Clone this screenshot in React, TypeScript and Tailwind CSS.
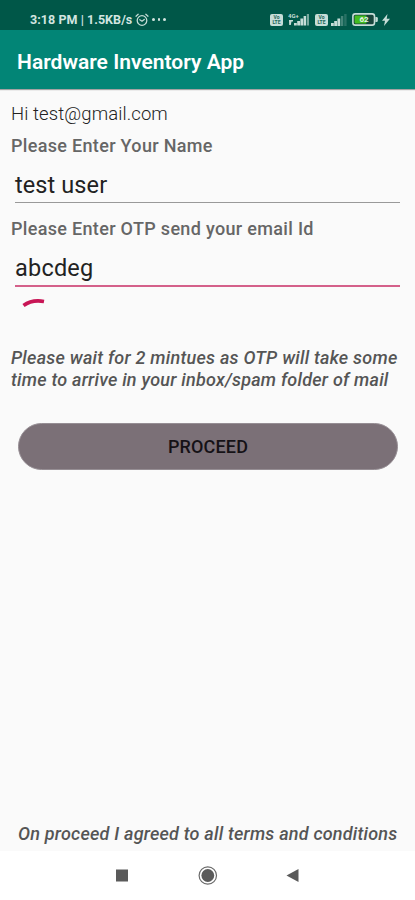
function AlarmIcon() {
  return (
    <svg width="14" height="14" viewBox="0 0 14 14" fill="none" stroke="#c3dbd5" strokeWidth="1.3" strokeLinecap="round">
      <circle cx="7" cy="7.5" r="4.8" />
      <path d="M1 3.2 3.2 1.3M13 3.2 10.8 1.3M4.8 6.8 7 8.3l2.3-1.8" />
    </svg>
  );
}

function VolteBadge() {
  return (
    <span className="flex h-3 w-[13px] flex-col items-center justify-center rounded-[2px] bg-[#c6ddd7] text-[5px] leading-[5px] font-bold text-[#1c6558]">
      <span>Vo</span>
      <span>LTE</span>
    </span>
  );
}

function SignalIcon() {
  return (
    <svg width="16" height="12" viewBox="0 0 16 12" fill="#c6ddd7">
      <rect x="0" y="9" width="2.8" height="3" />
      <rect x="3.2" y="7" width="2.8" height="5" />
      <rect x="6.4" y="4.5" width="2.8" height="7.5" />
      <rect x="9.9" y="2" width="2.4" height="10" opacity="0.35" />
      <rect x="13.2" y="0" width="2.4" height="12" opacity="0.2" />
    </svg>
  );
}

function MobileDataIcon() {
  return (
    <svg width="22" height="13" viewBox="0 0 22 13" fill="#c6ddd7">
      <text x="0" y="4.8" fontSize="6" fontWeight="700" fontFamily="Roboto, sans-serif">4G+</text>
      <path d="M1 7h4v1.5H3.5L2.8 12H1.2z" />
      <rect x="6" y="10" width="2.8" height="2.5" />
      <rect x="9.2" y="8" width="2.8" height="4.5" />
      <rect x="12.4" y="5.5" width="2.8" height="7" />
      <rect x="15.6" y="3" width="2.5" height="9.5" />
      <rect x="18.8" y="1" width="2.2" height="11.5" opacity="0.6" />
    </svg>
  );
}

function BatteryIcon() {
  return (
    <svg width="26" height="13" viewBox="0 0 26 13">
      <rect x="0.9" y="0.9" width="21.6" height="11.2" rx="2.4" fill="#18463c" stroke="#c6ddd7" strokeWidth="1.6" />
      <path d="M23.4 4h1.1q1.3 0 1.3 1.3v2.4q0 1.3-1.3 1.3h-1.1z" fill="#c6ddd7" />
      <rect x="2.6" y="2.6" width="12" height="7.8" rx="0.8" fill="#43bd21" />
      <text x="12" y="9.4" fontSize="8" fontWeight="700" textAnchor="middle" fill="#e7f5e8" fontFamily="Roboto, sans-serif">62</text>
    </svg>
  );
}

function StatusBar() {
  return (
    <div className="flex h-[30px] items-center bg-[#005748] pt-[9px] pl-[30px] text-[#d3e5e0]">
      <span className="w-[103px] text-[12.5px] leading-[14px] font-bold tracking-[0.05px] whitespace-nowrap">
        3:18 PM | 1.5KB/s
      </span>
      <span className="ml-[2px]">
        <AlarmIcon />
      </span>
      <span className="ml-[3px] flex gap-[3px]">
        <i className="size-[2.5px] rounded-full bg-current" />
        <i className="size-[2.5px] rounded-full bg-current" />
        <i className="size-[2.5px] rounded-full bg-current" />
      </span>
      <div className="ml-auto flex items-center pr-[25px]">
        <VolteBadge />
        <span className="ml-[5px]">
          <MobileDataIcon />
        </span>
        <span className="ml-[5px]">
          <VolteBadge />
        </span>
        <span className="ml-[3px]">
          <SignalIcon />
        </span>
        <span className="ml-[5px]">
          <BatteryIcon />
        </span>
        <svg className="ml-[4px]" width="8" height="12" viewBox="0 0 8 12" fill="#c6ddd7">
          <path d="M5.5 0 0 6.8h3L2 12l6-7.2H4.7z" />
        </svg>
      </div>
    </div>
  );
}

function NavBar() {
  return (
    <div className="h-[49px] bg-white">
      <svg width="415" height="49" viewBox="0 0 415 49" fill="#5a5a5a">
        <rect x="116" y="18.5" width="12" height="12" />
        <circle cx="207.8" cy="24.5" r="8.7" fill="none" stroke="#6a6a6a" strokeWidth="1.2" />
        <circle cx="207.8" cy="24.5" r="6.4" />
        <path d="M286.5 24.5 298.5 18v13z" />
      </svg>
    </div>
  );
}

export default function App() {
  return (
    <div className="flex h-[900px] w-[415px] flex-col overflow-hidden bg-[#fafafa] font-['Roboto',sans-serif]">
      <StatusBar />
      <header className="flex h-[59px] items-center bg-[#028576] pt-1 pl-[17px] shadow-[0_1px_1px_rgba(0,0,0,0.35)]">
        <h1 className="text-[21px] leading-6 font-semibold tracking-[0.02px] whitespace-nowrap text-white">
          Hardware Inventory App
        </h1>
      </header>

      <main className="flex flex-1 flex-col pl-[11px] whitespace-nowrap text-[#666]">
        <p className="mt-[13px] text-[18.5px] leading-6 font-light tracking-[0.1px] text-[#222]">Hi test@gmail.com</p>
        <label className="mt-[8px] text-[18px] leading-6 font-medium tracking-[0.32px]">Please Enter Your Name</label>
        <div className="mt-[10px] mr-[15px] ml-[4px] flex h-[35px] items-center border-b border-[#999] text-[23.5px] leading-7 tracking-[0.1px] text-[#222]">
          test user
        </div>
        <label className="mt-[14px] text-[18px] leading-6 font-medium tracking-[0.32px]">
          Please Enter OTP send your email Id
        </label>
        <div className="mt-[10px] mr-[15px] ml-[4px] flex h-[36px] items-center border-b-2 border-[#d4608a] text-[23.5px] leading-7 tracking-[0.2px] text-[#222]">
          abcdeg
        </div>
        <svg className="mt-[10px] ml-[10px]" width="26" height="12" viewBox="0 0 26 12" fill="none">
          <path d="M2.5 8.5Q11 2.2 23 4.4" stroke="#c81555" strokeWidth="3.6" />
        </svg>
        <p className="mt-[38px] text-[18px] leading-[22px] font-medium tracking-[0.23px] text-[#555] italic">
          Please wait for 2 mintues as OTP will take some
          <br />
          time to arrive in your inbox/spam folder of mail
        </p>
        <button className="mt-[32px] mr-[17px] ml-[7px] h-[47px] rounded-full border border-[#968e94] bg-[#7b7077] text-[18px] font-medium tracking-[0.15px] text-[#151216]">
          PROCEED
        </button>
        <p className="mt-auto mb-[5px] ml-[7px] text-[18px] leading-6 font-medium tracking-[0.21px] text-[#555] italic">
          On proceed I agreed to all terms and conditions
        </p>
      </main>

      <NavBar />
    </div>
  );
}
